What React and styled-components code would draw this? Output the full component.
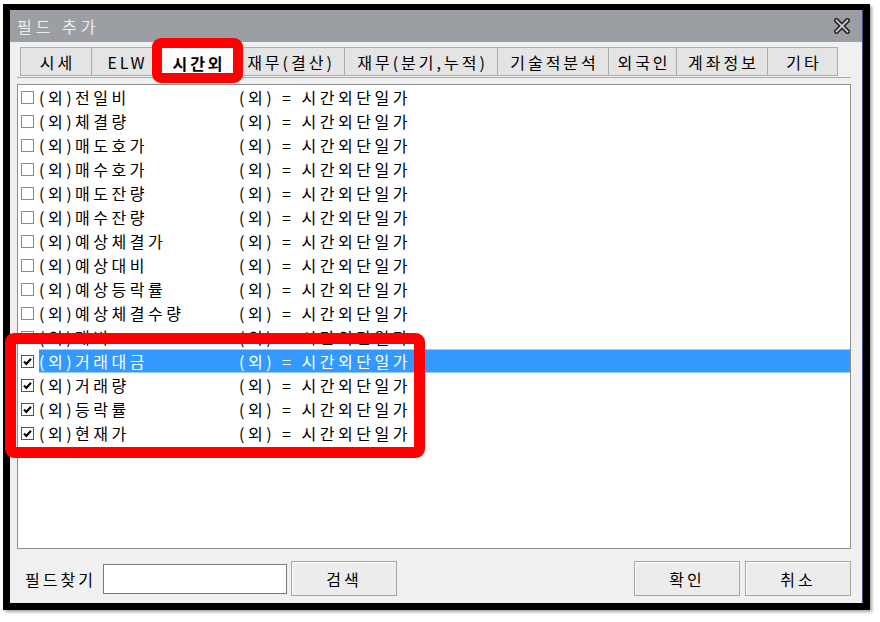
import React from 'react';
import styled, { createGlobalStyle, css } from 'styled-components';

const GlobalStyle = createGlobalStyle`
  html, body {
    margin: 0;
    padding: 0;
    background: #ffffff;
  }
  body {
    font-family: "Noto Sans CJK KR", "Noto Sans", sans-serif;
    font-size: 16px;
    color: #000;
  }
`;

const Page = styled.div`
  position: relative;
  width: 880px;
  height: 622px;
  padding: 4px 0 0 3px;
  box-sizing: border-box;
  overflow: hidden;
`;

const Window = styled.div`
  width: 867px;
  height: 606px;
  box-sizing: border-box;
  border: 7px solid #000;
  border-top-width: 6px;
  box-shadow: 2px 2px 3px rgba(0, 0, 0, 0.35);
  display: flex;
  flex-direction: column;
`;

const TitleBar = styled.div`
  height: 32px;
  flex: none;
  background: #9b9ea3;
  display: flex;
  align-items: center;
  justify-content: space-between;
  padding: 0 12px 0 7px;
  color: #ececec;
  letter-spacing: 4px;
  border-right: 1px solid #4a4f86;
`;

const CloseButton = styled.div`
  width: 16px;
  height: 16px;
  display: flex;
`;

const Body = styled.div`
  flex: 1;
  background: #f0f0f0;
  padding: 5px 11px 0 7px;
  display: flex;
  flex-direction: column;
  border-right: 1px solid #4a4f86;
`;

const TabBar = styled.div`
  display: flex;
  height: 30px;
  padding-left: 3px;
  border-bottom: 1px solid #a9a9a9;
`;

const Tab = styled.div`
  width: ${p => p.w}px;
  box-sizing: border-box;
  height: 29px;
  display: flex;
  align-items: center;
  justify-content: center;
  background: #e4e4e4;
  border: 1px solid #acacac;
  border-left: none;
  letter-spacing: 3px;
  padding-left: 3px;
  white-space: nowrap;
  &:first-child {
    border-left: 1px solid #acacac;
  }
  ${p =>
    p.active &&
    css`
      background: #fbfbfb;
      font-weight: bold;
      height: 30px;
      border-bottom: none;
    `};
`;

const ListBox = styled.div`
  margin-top: 6px;
  height: 465px;
  box-sizing: border-box;
  background: #fff;
  border: 1px solid #8e8e8e;
  overflow: hidden;
`;

const Row = styled.div`
  height: 24px;
  display: flex;
  align-items: center;
  padding-left: 3px;
`;

const Check = styled.div`
  width: 13px;
  height: 13px;
  box-sizing: border-box;
  border: 1px solid ${p => (p.checked ? '#555' : '#8a8a8a')};
  background: #fff;
  margin-right: 5px;
  flex: none;
  display: flex;
`;

const Cells = styled.div`
  flex: 1;
  height: 24px;
  box-sizing: border-box;
  display: flex;
  align-items: center;
  letter-spacing: 3.5px;
  white-space: nowrap;
  ${p =>
    p.selected &&
    css`
      background: #3399ff;
      color: #fff;
      border-top: 1px solid #9dcbf7;
      border-bottom: 1px solid #9dcbf7;
    `};
`;

const Name = styled.span`
  width: 200px;
  flex: none;
`;

const Footer = styled.div`
  display: flex;
  align-items: center;
  margin-top: 12px;
  padding-left: 8px;
`;

const Label = styled.span`
  width: 78px;
  flex: none;
  letter-spacing: 3px;
`;

const Input = styled.div`
  width: 184px;
  height: 30px;
  box-sizing: border-box;
  background: #fff;
  border: 1px solid #7a7a7a;
  margin-right: 4px;
`;

const Button = styled.div`
  width: 106px;
  height: 35px;
  box-sizing: border-box;
  background: #ececec;
  border: 1px solid #a6a6a6;
  box-shadow: inset 1px 1px 0 #fafafa;
  display: flex;
  align-items: center;
  justify-content: center;
  letter-spacing: 3px;
  margin-left: ${p => p.gap || 0}px;
`;

const Mark = styled.div`
  position: absolute;
  left: ${p => p.x}px;
  top: ${p => p.y}px;
  width: ${p => p.w}px;
  height: ${p => p.h}px;
  box-sizing: border-box;
  border: ${p => p.t}px solid #ff0000;
  border-radius: 9px;
  pointer-events: none;
`;

const tabs = [
  ['시세', 72],
  ['ELW', 69],
  ['시간외', 74, true],
  ['재무(결산)', 110],
  ['재무(분기,누적)', 153],
  ['기술적분석', 111],
  ['외국인', 68],
  ['계좌정보', 91],
  ['기타', 70],
];

const fields = [
  ['(외)전일비'],
  ['(외)체결량'],
  ['(외)매도호가'],
  ['(외)매수호가'],
  ['(외)매도잔량'],
  ['(외)매수잔량'],
  ['(외)예상체결가'],
  ['(외)예상대비'],
  ['(외)예상등락률'],
  ['(외)예상체결수량'],
  ['(외)대비'],
  ['(외)거래대금', true, true],
  ['(외)거래량', true],
  ['(외)등락률', true],
  ['(외)현재가', true],
];

const CloseIcon = () => (
  <svg width="16" height="16" viewBox="0 0 16 16">
    <path d="M2.5 2.5 L13.5 13.5 M13.5 2.5 L2.5 13.5" stroke="#2b2b2b" strokeWidth="5" strokeLinecap="square" />
    <path d="M2.5 2.5 L13.5 13.5 M13.5 2.5 L2.5 13.5" stroke="#d8d8d8" strokeWidth="1.6" strokeLinecap="square" />
  </svg>
);

const Tick = () => (
  <svg width="11" height="11" viewBox="0 0 11 11">
    <path d="M2 5.5 L4.3 8 L9 2.8" fill="none" stroke="#000" strokeWidth="2.1" />
  </svg>
);

export default function App() {
  return (
    <Page>
      <GlobalStyle />
      <Window>
        <TitleBar>
          <span>필드 추가</span>
          <CloseButton>
            <CloseIcon />
          </CloseButton>
        </TitleBar>
        <Body>
          <TabBar>
            {tabs.map(([label, w, active]) => (
              <Tab key={label} w={w} active={active}>
                {label}
              </Tab>
            ))}
          </TabBar>
          <ListBox>
            {fields.map(([name, checked, selected]) => (
              <Row key={name}>
                <Check checked={checked}>{checked && <Tick />}</Check>
                <Cells selected={selected}>
                  <Name>{name}</Name>
                  <span>(외) = 시간외단일가</span>
                </Cells>
              </Row>
            ))}
          </ListBox>
          <Footer>
            <Label>필드찾기</Label>
            <Input />
            <Button>검색</Button>
            <Button gap={237}>확인</Button>
            <Button gap={5}>취소</Button>
          </Footer>
        </Body>
      </Window>
      <Mark x={152} y={38} w={91} h={45} t={10} />
      <Mark x={5} y={333} w={420} h={125} t={11} />
    </Page>
  );
}
